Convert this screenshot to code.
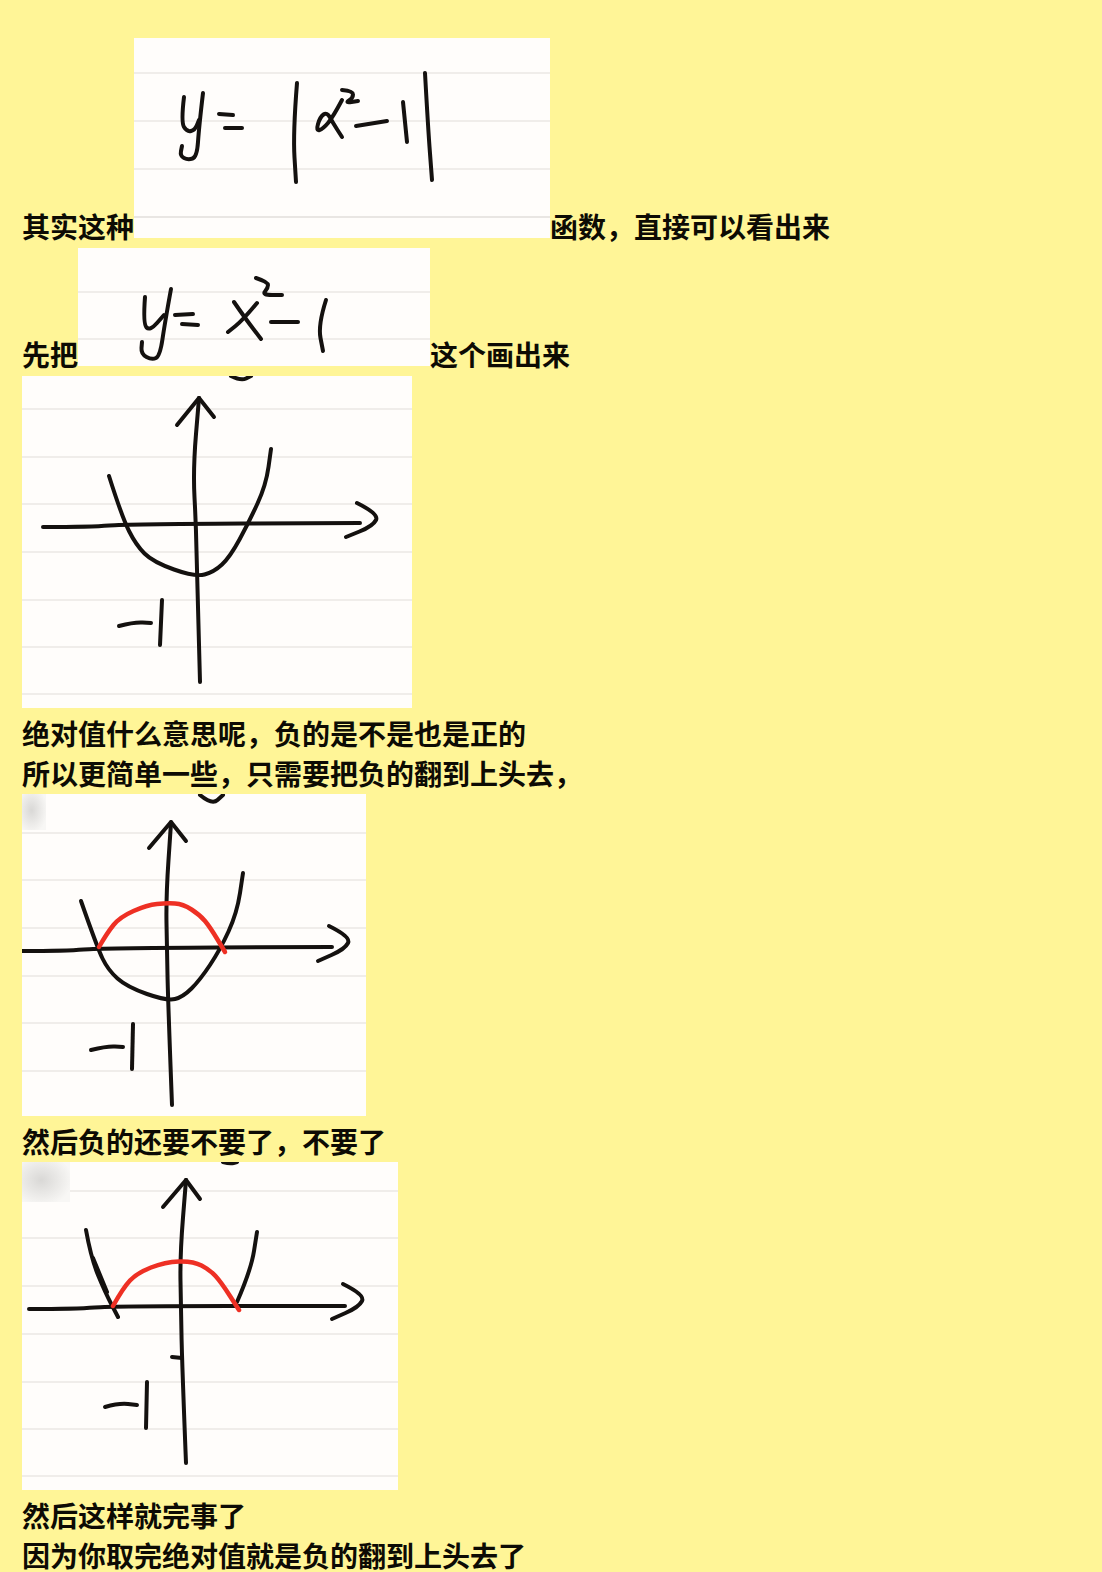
type Pt = [number, number]

// rounds off hand-drawn strokes through their points
const smooth = (pts: Pt[]) => {
    let d = `M${pts[0][0]} ${pts[0][1]}`
    for (let i = 1; i < pts.length - 1; i++) {
        const mx = (pts[i][0] + pts[i + 1][0]) / 2
        const my = (pts[i][1] + pts[i + 1][1]) / 2
        d += ` Q${pts[i][0]} ${pts[i][1]} ${mx} ${my}`
    }
    const last = pts[pts.length - 1]
    return d + ` L${last[0]} ${last[1]}`
}

const Sketch = ({ w, h, rules, strokes, red, smudge, inline }: {
    w: number, h: number, rules: number[], strokes: Pt[][], red?: Pt[], smudge?: [number, number], inline?: boolean
}) => (
    <svg
        viewBox={`0 0 ${w} ${h}`}
        width={w}
        height={h}
        className={inline ? "inline align-baseline bg-[#fffdfb]" : "block bg-[#fffdfb]"}
        fill="none"
        strokeLinecap="round"
        strokeLinejoin="round"
    >
        {rules.map((y, i) => (
            <rect key={i} x="0" y={y - 0.75} width={w} height="1.5" fill={i === rules.length - 1 && h === 200 ? "#e2dedc" : "#ece7e5"} />
        ))}
        {smudge && (
            <>
                <defs>
                    <radialGradient id={`smudge-${w}`} cx="0.4" cy="0.45" r="0.65">
                        <stop offset="0" stopColor="#d9d8d6" />
                        <stop offset="1" stopColor="#f8f7f5" />
                    </radialGradient>
                </defs>
                <rect x="0" y="0" width={smudge[0]} height={smudge[1]} fill={`url(#smudge-${w})`} />
            </>
        )}
        {strokes.map((s, i) => (
            <path key={i} d={smooth(s)} stroke="#14110f" strokeWidth={4} />
        ))}
        {red && <path d={smooth(red)} stroke="#ee3024" strokeWidth={4.5} />}
    </svg>
)

const Line = ({ children, className }: { children: React.ReactNode, className?: string }) => (
    <p className={`font-semibold text-[28px] leading-[40px] text-[#0d0b04] ${className ?? ""}`}>{children}</p>
)

export default function App() {
    return (
        <div className="h-[1572px] overflow-hidden bg-[#fff597] pl-[22px] pt-[38px] font-['Noto_Sans_CJK_SC','Noto_Sans',sans-serif]">
            <Line className="mb-[2px]">
                其实这种
                <Sketch
                    inline
                    w={416}
                    h={200}
                    rules={[35, 83, 131, 179]}
                    strokes={[
                        [[50, 59], [47, 84], [53, 94], [61, 92], [65, 82]],
                        [[69, 55], [65, 89], [63, 119], [54, 122], [46, 118], [48, 108]],
                        [[85, 76], [99, 77]],
                        [[91, 90], [108, 90]],
                        [[163, 45], [159, 95], [162, 144]],
                        [[208, 62], [199, 79], [189, 91], [182, 93], [186, 79], [193, 74], [199, 85], [208, 99]],
                        [[208, 52], [219, 53], [219, 60], [211, 65], [224, 63]],
                        [[222, 88], [253, 83]],
                        [[269, 64], [273, 104]],
                        [[291, 35], [294, 89], [298, 142]],
                    ]}
                />
                函数，直接可以看出来
            </Line>
            <Line className="mb-[2px]">
                先把
                <Sketch
                    inline
                    w={352}
                    h={118}
                    rules={[44, 91]}
                    strokes={[
                        [[67, 49], [65, 76], [72, 83], [86, 67]],
                        [[93, 41], [87, 74], [82, 108], [74, 112], [63, 106], [64, 94]],
                        [[97, 67], [115, 66]],
                        [[104, 76], [120, 77]],
                        [[156, 54], [167, 70], [183, 91]],
                        [[179, 55], [165, 72], [150, 84]],
                        [[178, 30], [190, 34], [190, 40], [184, 47], [204, 47]],
                        [[193, 74], [220, 74]],
                        [[248, 52], [240, 77], [245, 103]],
                    ]}
                />
                这个画出来
            </Line>
            <Sketch
                w={390}
                h={332}
                rules={[33, 81, 128, 176, 224, 271, 318]}
                strokes={[
                    [[178, 306], [175, 201], [174, 149], [171, 94], [177, 22]],
                    [[155, 49], [177, 22]],
                    [[177, 22], [192, 41]],
                    [[21, 151], [70, 151], [104, 148], [338, 147]],
                    [[335, 127], [357, 138], [351, 150], [324, 161]],
                    [[87, 100], [100, 141], [114, 169], [131, 186], [173, 201], [192, 196], [208, 181], [227, 146], [244, 109], [249, 73]],
                    [[97, 250], [112, 246], [129, 247]],
                    [[140, 224], [138, 269]],
                    [[209, 0], [219, 5], [229, 0]],
                ]}
            />
            <Line className="mt-[5px]">绝对值什么意思呢，负的是不是也是正的</Line>
            <Line className="mb-[1px]">所以更简单一些，只需要把负的翻到上头去，</Line>
            <Sketch
                w={344}
                h={322}
                rules={[39, 86, 134, 182, 229, 277]}
                smudge={[24, 36]}
                strokes={[
                    [[150, 311], [146, 206], [145, 156], [144, 103], [149, 29]],
                    [[127, 54], [149, 28]],
                    [[149, 28], [164, 47]],
                    [[0, 157], [45, 157], [78, 154], [310, 153]],
                    [[307, 132], [329, 143], [323, 155], [296, 167]],
                    [[59, 107], [75, 153], [86, 176], [105, 193], [145, 207], [161, 203], [178, 186], [198, 156], [215, 119], [221, 79]],
                    [[69, 256], [85, 252], [101, 253]],
                    [[111, 230], [110, 275]],
                    [[178, 1], [190, 11], [201, 1]],
                ]}
                red={[[77, 153], [85, 139], [98, 123], [125, 111], [145, 109], [161, 110], [178, 121], [188, 133], [203, 158]]}
            />
            <Line className="mt-[5px] mb-[1px]">然后负的还要不要了，不要了</Line>
            <Sketch
                w={376}
                h={328}
                rules={[29, 76, 124, 172, 220, 267, 314]}
                smudge={[48, 40]}
                strokes={[
                    [[164, 301], [160, 200], [159, 146], [158, 93], [164, 18]],
                    [[141, 45], [164, 18]],
                    [[164, 18], [178, 37]],
                    [[7, 147], [55, 147], [90, 144], [323, 144]],
                    [[321, 122], [343, 133], [337, 145], [310, 157]],
                    [[64, 68], [69, 96], [83, 130], [96, 155]],
                    [[71, 96], [85, 130]],
                    [[215, 140], [229, 108], [235, 70]],
                    [[83, 245], [97, 241], [115, 243]],
                    [[125, 220], [124, 266]],
                    [[150, 195], [160, 196]],
                    [[201, 0], [208, 2], [215, 0]],
                ]}
                red={[[91, 144], [101, 126], [115, 111], [143, 100], [171, 99], [188, 108], [199, 120], [217, 148]]}
            />
            <Line className="mt-[5px]">然后这样就完事了</Line>
            <Line className="mt-[4px] !leading-[32px]">因为你取完绝对值就是负的翻到上头去了</Line>
        </div>
    )
}
